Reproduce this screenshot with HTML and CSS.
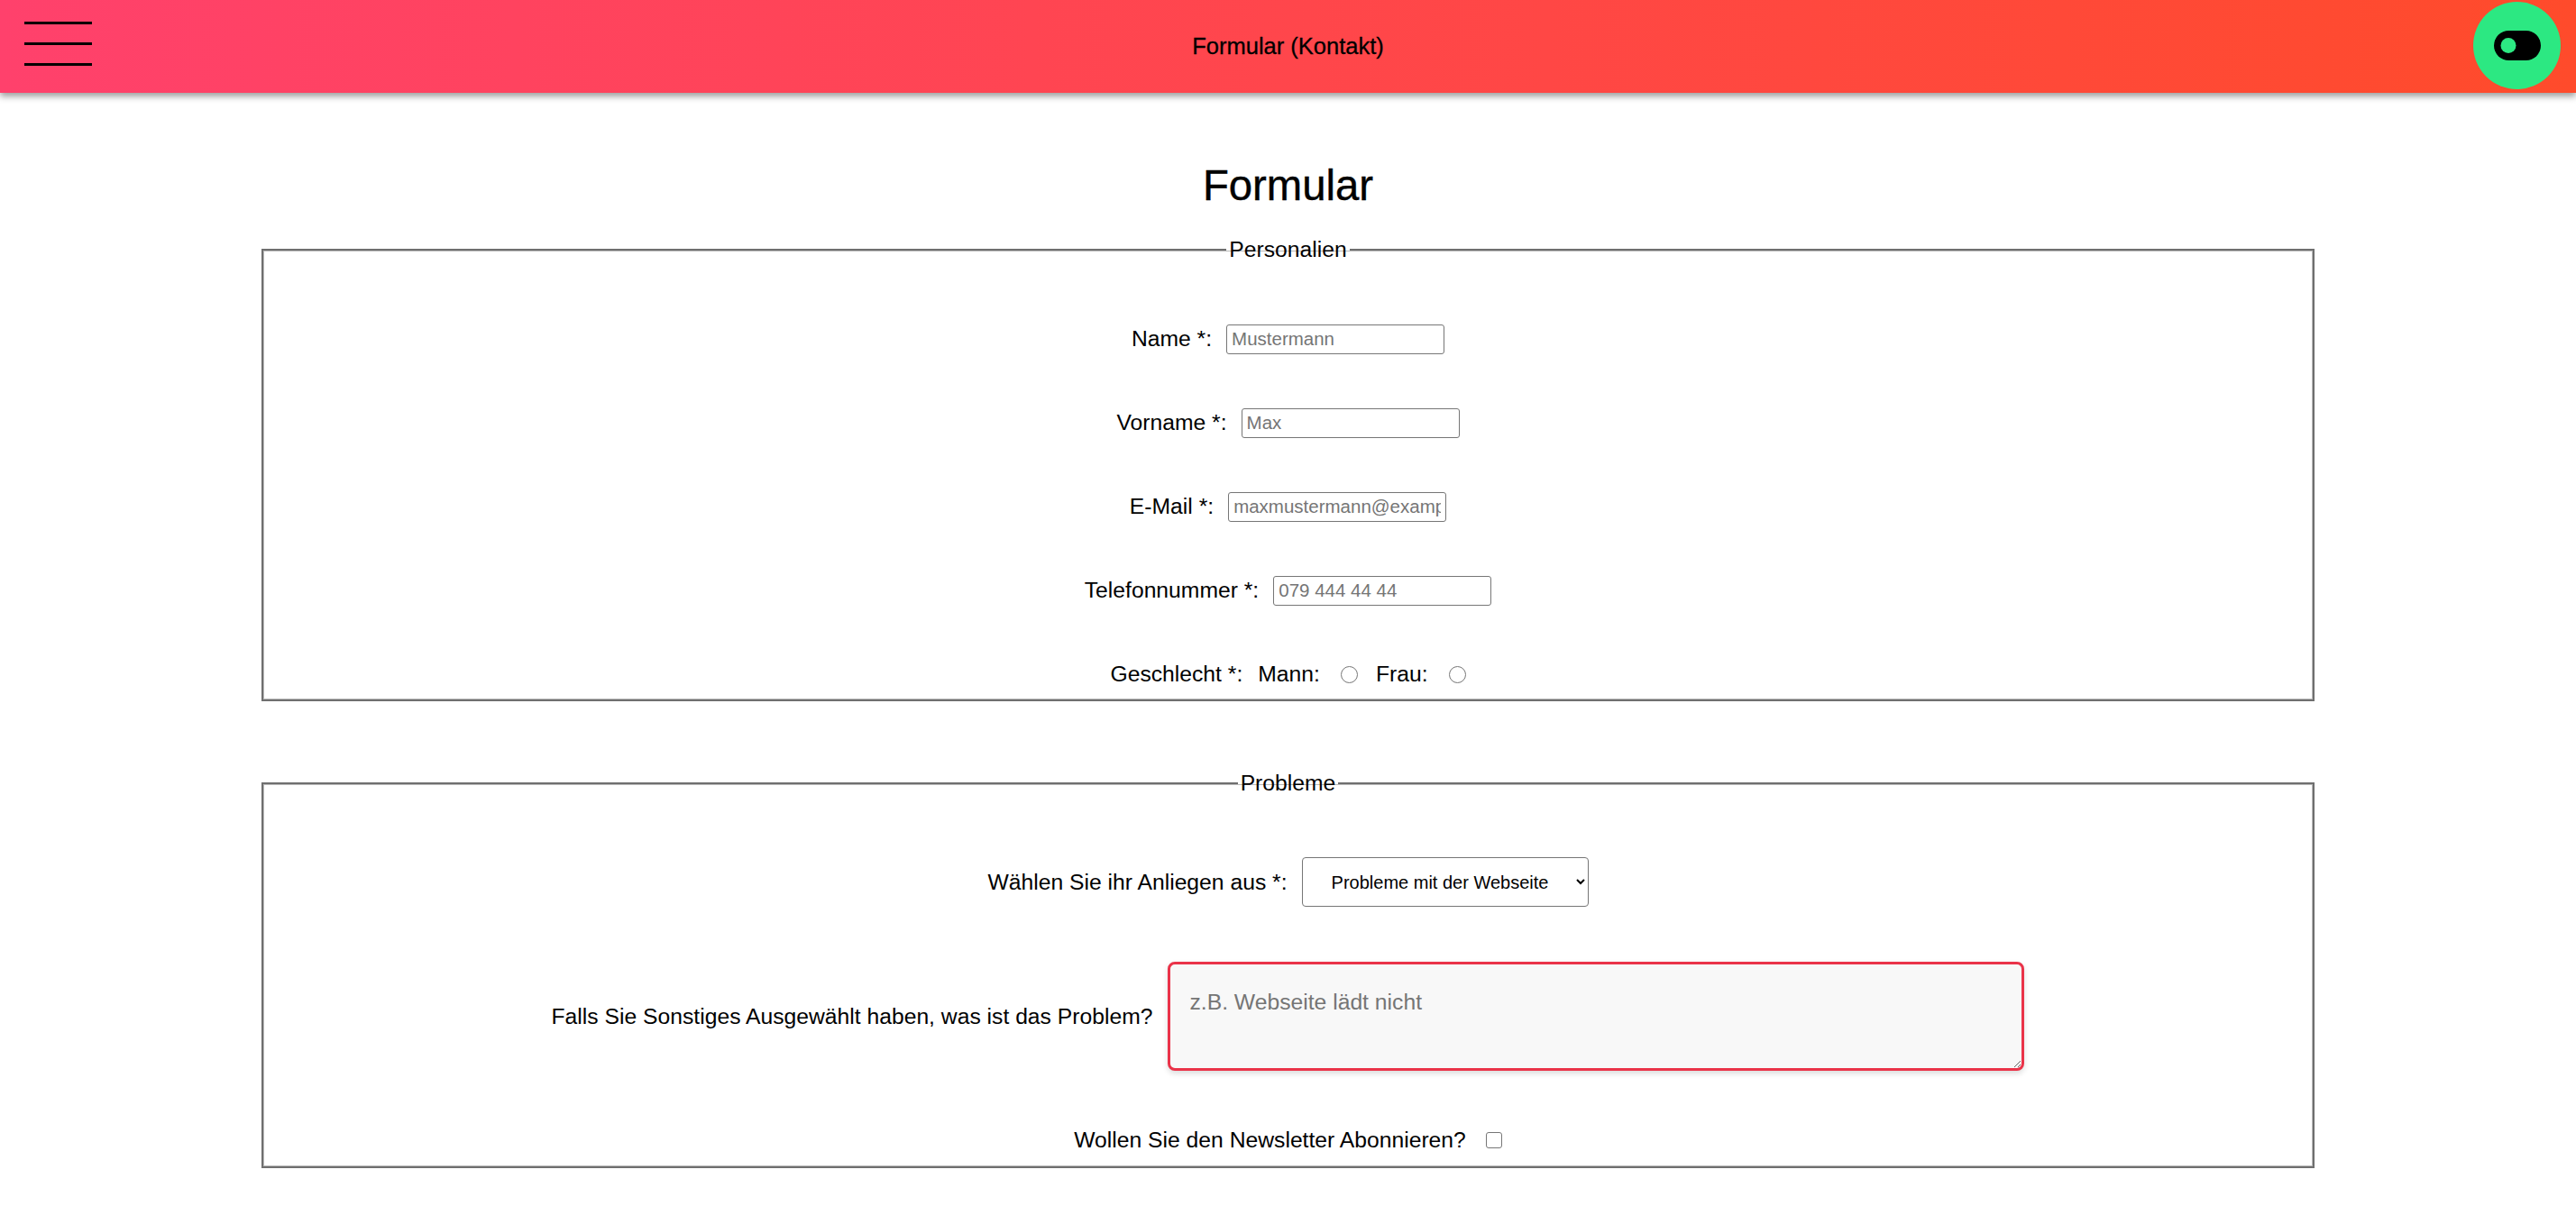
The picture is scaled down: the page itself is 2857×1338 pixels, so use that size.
FILE: index.html
```html
<!DOCTYPE html>
<html lang="de">
<head>
<meta charset="utf-8">
<title>Formular (Kontakt)</title>
<link rel="stylesheet" href="styles.css">
</head>
<body>
<header class="topbar">
  <div class="burger" aria-label="Menü">
    <span></span><span></span><span></span>
  </div>
  <div class="topbar-title">Formular (Kontakt)</div>
  <button class="theme-btn" type="button" aria-label="Design umschalten">
    <svg width="52" height="33" viewBox="0 0 52 33" aria-hidden="true">
      <rect x="0" y="0" width="52" height="33" rx="16.5" fill="#000"/>
      <circle cx="16" cy="16.5" r="8.5" fill="#2ce882"/>
    </svg>
  </button>
</header>

<main class="page">
  <h1 class="page-title">Formular</h1>
  <form class="contact-form">
    <fieldset class="group group-personal">
      <legend>Personalien</legend>
      <div class="rows">
        <div class="row">
          <label for="name">Name *:</label>
          <input class="text-input" id="name" type="text" placeholder="Mustermann">
        </div>
        <div class="row">
          <label for="vorname">Vorname *:</label>
          <input class="text-input" id="vorname" type="text" placeholder="Max">
        </div>
        <div class="row">
          <label for="email">E-Mail *:</label>
          <input class="text-input" id="email" type="email" placeholder="maxmustermann@example.com">
        </div>
        <div class="row">
          <label for="tel">Telefonnummer *:</label>
          <input class="text-input" id="tel" type="tel" placeholder="079 444 44 44">
        </div>
        <div class="row row-gender">
          <span class="gender-label">Geschlecht *:</span>
          <label class="opt-label" for="mann">Mann:</label>
          <input class="radio" id="mann" type="radio" name="geschlecht">
          <label class="opt-label" for="frau">Frau:</label>
          <input class="radio" id="frau" type="radio" name="geschlecht">
        </div>
      </div>
    </fieldset>

    <fieldset class="group group-problems">
      <legend>Probleme</legend>
      <div class="rows rows-problems">
        <div class="row row-select">
          <label for="anliegen">Wählen Sie ihr Anliegen aus *:</label>
          <select class="select" id="anliegen">
            <option>Probleme mit der Webseite</option>
            <option>Sonstiges</option>
          </select>
        </div>
        <div class="row row-textarea">
          <label for="problem">Falls Sie Sonstiges Ausgewählt haben, was ist das Problem?</label>
          <textarea class="textarea" id="problem" placeholder="z.B. Webseite lädt nicht"></textarea>
        </div>
        <div class="row row-news">
          <label for="newsletter">Wollen Sie den Newsletter Abonnieren?</label>
          <input class="checkbox" id="newsletter" type="checkbox">
        </div>
      </div>
    </fieldset>
  </form>
</main>
</body>
</html>
```

FILE: styles.css
```css
* {
  box-sizing: border-box;
}

html, body {
  margin: 0;
  padding: 0;
  background: #ffffff;
}

body {
  font-family: "Liberation Sans", Arial, Helvetica, sans-serif;
  font-size: 24.7px;
  color: #000;
  overflow: hidden;
}

/* ---------- Top bar ---------- */
.topbar {
  height: 103px;
  display: grid;
  grid-template-columns: 1fr auto 1fr;
  align-items: center;
  padding: 0 17px;
  background: linear-gradient(to right, #ff416c, #ff4b2b);
  box-shadow: 0 4px 7px rgba(0, 0, 0, 0.38);
  position: relative;
  z-index: 2;
}

.burger {
  display: flex;
  flex-direction: column;
  gap: 20px;
  width: 75px;
  margin-left: 10px;
  align-self: start;
  margin-top: 24px;
}

.burger span {
  display: block;
  height: 3px;
  background: #000;
}

.topbar-title {
  font-size: 25.5px;
  line-height: 1;
  text-align: center;
  -webkit-text-stroke: 0.3px #000;
}

.theme-btn {
  justify-self: end;
  width: 97px;
  height: 97px;
  border: 0;
  padding: 0;
  margin-top: -2px;
  border-radius: 50%;
  background: #2ce882;
  display: flex;
  align-items: center;
  justify-content: center;
}

.theme-btn svg {
  display: block;
}

/* ---------- Page ---------- */
.page {
  padding-top: 75px;
}

.page-title {
  margin: 0 0 30px;
  font-size: 47.3px;
  font-weight: 400;
  text-align: center;
  line-height: normal;
  -webkit-text-stroke: 0.4px #000;
}

.group {
  width: 2277px;
  margin: 0 auto;
  border: 2px solid #6f6f6f;
  box-shadow: inset 0 0 0 1px #b9b9b9;
  min-width: 0;
}

.group legend {
  margin-left: auto;
  margin-right: auto;
  padding: 0 3px;
  font-size: 24.7px;
  line-height: 28px;
}

.group-personal {
  padding: 65px 0 8px;
  margin-bottom: 77px;
}

.group-problems {
  padding: 68px 0 13px;
}

.rows {
  display: flex;
  flex-direction: column;
  gap: 53px;
}

.rows-problems {
  gap: 61px;
}

.row {
  display: flex;
  justify-content: center;
  align-items: center;
  gap: 16px;
  height: 40px;
}

/* ---------- Inputs ---------- */
.text-input {
  width: 242px;
  height: 33px;
  border: 1px solid #767676;
  border-radius: 3px;
  padding: 0 5px;
  font-family: "Liberation Sans", Arial, sans-serif;
  font-size: 20.5px;
  color: #000;
  background: #fff;
}

.text-input::placeholder {
  color: #757575;
}

.row-gender {
  gap: 0;
}

.gender-label {
  margin-right: 17px;
}

.opt-label {
  margin-right: 23px;
}

.radio {
  appearance: none;
  -webkit-appearance: none;
  width: 19px;
  height: 19px;
  margin: 0 20px 0 0;
  border: 1px solid #767676;
  border-radius: 50%;
  background: #fff;
}

.radio:last-child {
  margin-right: 0;
}

.row-select {
  height: 55px;
}

.select {
  width: 318px;
  height: 55px;
  padding: 0 4px 0 28px;
  border: 1px solid #767676;
  border-radius: 4px;
  background-color: #fff;
  font-family: "Liberation Sans", Arial, sans-serif;
  font-size: 20px;
  color: #000;
}

.row-textarea {
  height: 121px;
  gap: 17px;
}

.textarea {
  width: 950px;
  height: 121px;
  padding: 28px 21px;
  border: 3px solid #ea3349;
  border-radius: 8px;
  background: #f8f8f8;
  box-shadow: 0 3px 6px rgba(0, 0, 0, 0.14);
  font-family: "Liberation Sans", Arial, sans-serif;
  font-size: 24.7px;
  color: #000;
}

.textarea::placeholder {
  color: #757575;
}

.row-news {
  height: 32px;
  gap: 22px;
}

.checkbox {
  appearance: none;
  -webkit-appearance: none;
  width: 18px;
  height: 18px;
  margin: 0;
  border: 1px solid #767676;
  border-radius: 3px;
  background: #fff;
}
```
